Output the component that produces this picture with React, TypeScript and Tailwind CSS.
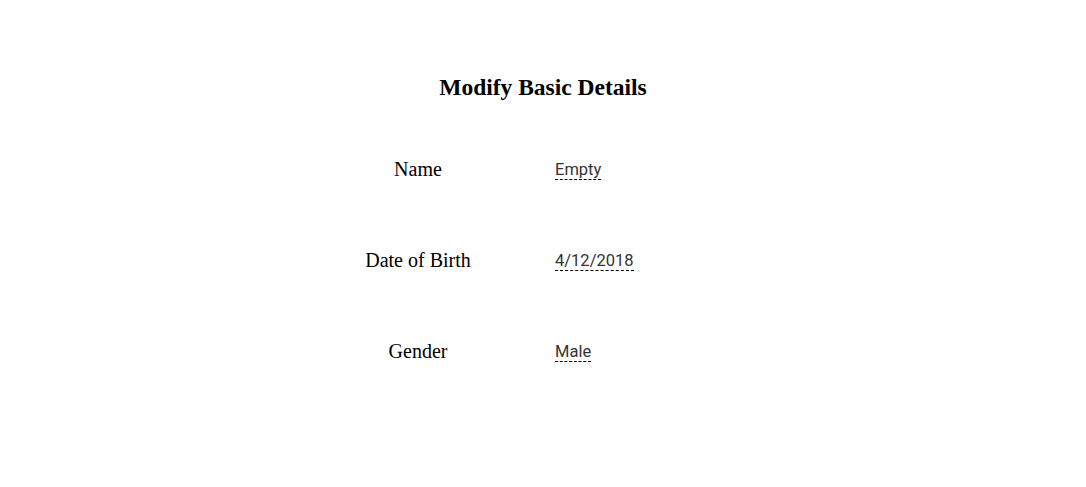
import React from 'react';

const rows = [
  { label: 'Name', value: 'Empty' },
  { label: 'Date of Birth', value: '4/12/2018' },
  { label: 'Gender', value: 'Male' },
];

function App() {
  return (
    <div className="min-h-[487px] w-full bg-white pt-[74px] font-['Liberation_Serif',serif] text-black">
      <h3 className="text-center text-[23.5px] font-bold leading-[26px]">Modify Basic Details</h3>

      <div className="mx-auto mt-[24px] w-[410px]">
        {rows.map((row) => (
          <div key={row.label} className="grid h-[91px] grid-cols-[160px_193px] items-center gap-x-[57px]">
            <div className="text-center text-[20px] leading-[23px]">{row.label}</div>
            <div>
              <span className="border-b border-dashed border-black font-['Roboto',sans-serif] text-[16.5px] leading-[19px] text-[#333]">
                {row.value}
              </span>
            </div>
          </div>
        ))}
      </div>
    </div>
  );
}

export default App;
